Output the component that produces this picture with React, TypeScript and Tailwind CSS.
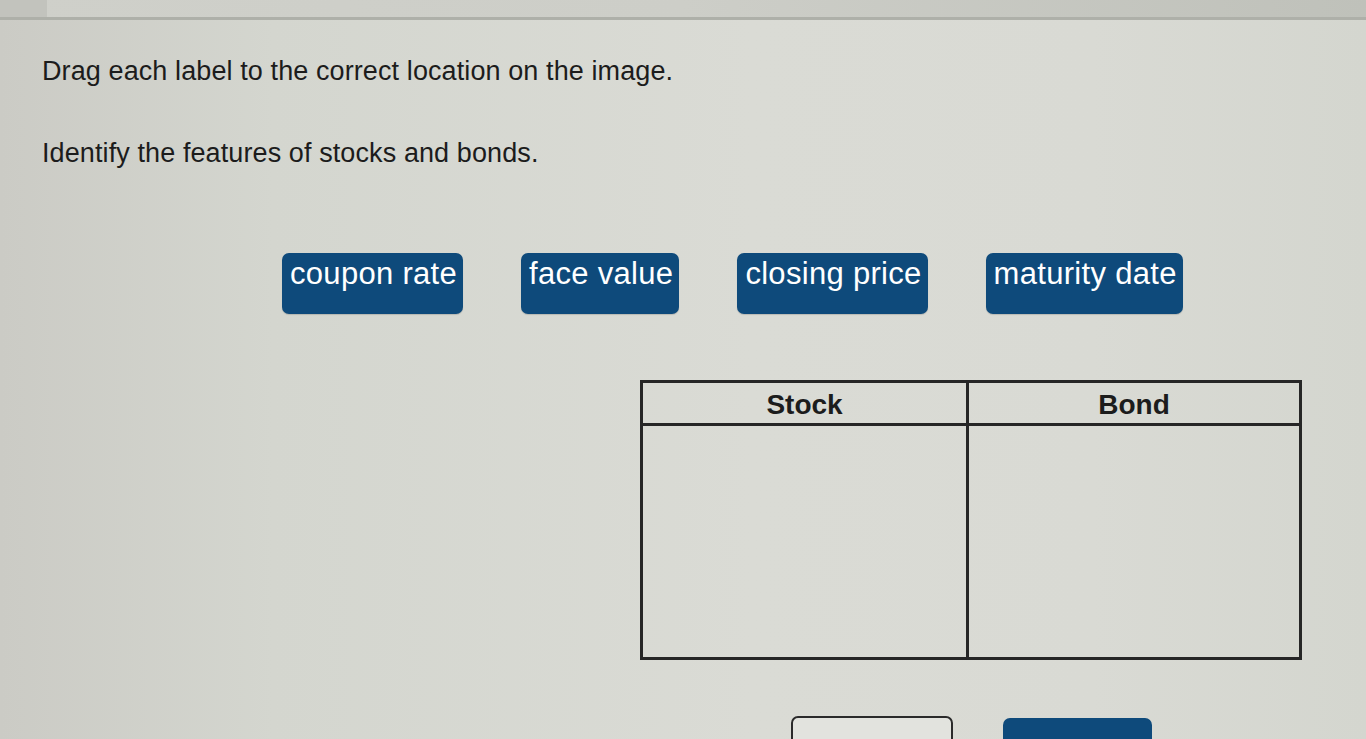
import React from "react";

const labels = ["coupon rate", "face value", "closing price", "maturity date"];

function Label({ text }: { text: string }) {
  return (
    <div className="rounded-[7px] bg-[#0e4a7b] pl-[8px] pr-[6px] pt-[3px] pb-[23px] text-[31px] leading-[35px] text-white tracking-[0.3px] shadow-[0_1px_1px_rgba(0,0,0,0.15)]">
      {text}
    </div>
  );
}

export default function App() {
  return (
    <div
      className="min-h-[739px] h-[739px] overflow-hidden bg-[linear-gradient(90deg,#cbcbc5_0%,#d4d6cf_20%,#dadbd5_55%,#d9dad4_80%,#d4d6cf_100%)] text-[#1c1c1c]"
      style={{ fontFamily: '"Liberation Sans", Arial, sans-serif' }}
    >
      {/* top strip of the question frame */}
      <div className="flex h-[20px] border-b-[3px] border-[#aeb0a9] bg-[linear-gradient(90deg,#cfd0ca_0%,#cdcec8_50%,#bfc1ba_100%)]">
        <div className="w-[47px] bg-[#c2c3bd]" />
      </div>

      <div className="pl-[42px]">
        <p className="mt-[35px] text-[27px] leading-[32px] tracking-[0.1px]">
          Drag each label to the correct location on the image.
        </p>
        <p className="mt-[50px] text-[27px] leading-[32px] tracking-[0.1px]">
          Identify the features of stocks and bonds.
        </p>
      </div>

      {/* draggable labels */}
      <div className="mt-[84px] flex items-start gap-[58px] pl-[282px]">
        {labels.map((l) => (
          <Label key={l} text={l} />
        ))}
      </div>

      {/* drop targets */}
      <div className="ml-[640px] mt-[66px] w-[662px] border-[3px] border-[#262626]">
        <div className="grid grid-cols-[326px_1fr] border-b-[3px] border-[#262626]">
          <div className="flex h-[40px] items-center justify-center border-r-[3px] border-[#262626] pt-[3px] text-[28px] font-bold">
            Stock
          </div>
          <div className="flex h-[40px] items-center justify-center pt-[3px] text-[28px] font-bold">
            Bond
          </div>
        </div>
        <div className="grid h-[231px] grid-cols-[326px_1fr]">
          <div className="border-r-[3px] border-[#262626]" />
          <div />
        </div>
      </div>

      {/* action buttons */}
      <div className="ml-[791px] mt-[56px] flex items-start gap-[50px]">
        <div className="h-[40px] w-[162px] rounded-[7px] border-2 border-[#2a2a2a] bg-[#e2e3de]" />
        <div className="mt-[2px] h-[40px] w-[149px] rounded-[7px] bg-[#0e4a7b]" />
      </div>
    </div>
  );
}
